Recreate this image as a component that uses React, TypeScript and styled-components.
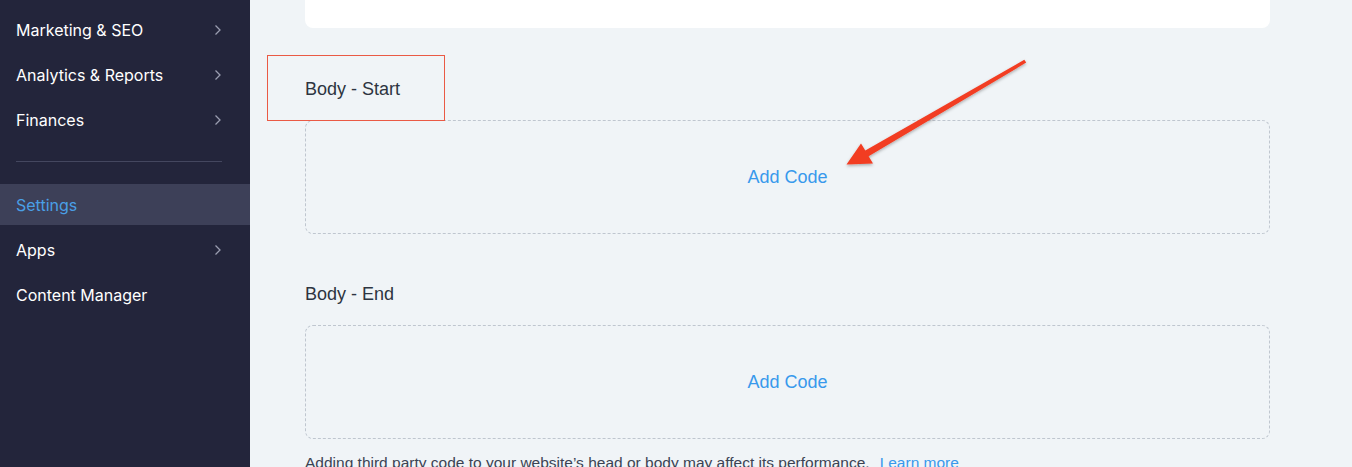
import React from 'react';
import styled, { createGlobalStyle } from 'styled-components';

const GlobalStyle = createGlobalStyle`
  html, body {
    margin: 0;
    padding: 0;
  }
  body {
    width: 1352px;
    height: 467px;
    overflow: hidden;
    background: #f0f4f7;
  }
`;

const Page = styled.div`
  position: relative;
  display: flex;
  width: 1352px;
  height: 467px;
  overflow: hidden;
`;

const Sidebar = styled.nav`
  display: flex;
  flex-direction: column;
  gap: 4px;
  width: 250px;
  flex-shrink: 0;
  background: #23253b;
  padding-top: 9px;
  box-sizing: border-box;
  font-family: Inter, 'Noto Sans', sans-serif;
`;

const NavItem = styled.div<{ $active?: boolean }>`
  display: flex;
  align-items: center;
  justify-content: space-between;
  height: 41px;
  flex-shrink: 0;
  padding: 0 28px 0 16px;
  font-size: 16px;
  font-weight: 400;
  color: ${p => (p.$active ? '#4a9fe6' : '#ffffff')};
  background: ${p => (p.$active ? '#3d4058' : 'transparent')};
`;

const Divider = styled.div`
  height: 1px;
  flex-shrink: 0;
  margin: 17px 28px 18px 16px;
  background: #44475f;
`;

const Main = styled.main`
  flex: 1;
  padding: 0 82px 0 55px;
  font-family: 'Liberation Sans', Arial, sans-serif;
  color: #2f3745;
`;

const TopCard = styled.div`
  height: 28px;
  background: #ffffff;
  border-radius: 0 0 8px 8px;
`;

const SectionTitle = styled.div<{ $top: number }>`
  font-size: 18px;
  line-height: 20px;
  margin-top: ${p => p.$top}px;
  margin-bottom: 21px;
  color: #2d3441;
`;

const CodeBox = styled.div`
  display: flex;
  align-items: center;
  justify-content: center;
  height: 114px;
  box-sizing: border-box;
  border: 1px dashed #bfc6cf;
  border-radius: 8px;
`;

const AddCode = styled.span`
  font-size: 18px;
  color: #3899ec;
`;

const Note = styled.p`
  margin: 14px 0 0;
  font-size: 15.5px;
  line-height: 20px;
  color: #3b4353;
  white-space: nowrap;
`;

const Link = styled.span`
  color: #3899ec;
  margin-left: 10px;
`;

const Highlight = styled.div`
  position: absolute;
  left: 267px;
  top: 55px;
  width: 178px;
  height: 66px;
  box-sizing: border-box;
  border: 1.5px solid #ea5a45;
  pointer-events: none;
`;

const Overlay = styled.svg`
  position: absolute;
  left: 0;
  top: 0;
  pointer-events: none;
`;

const Chevron = () => (
  <svg width="8" height="12" viewBox="0 0 8 12">
    <path d="M1.5 1.5 L6 6 L1.5 10.5" fill="none" stroke="#9a9db0" strokeWidth="1.3" />
  </svg>
);

const navTop = [
  { label: 'Marketing & SEO', more: true },
  { label: 'Analytics & Reports', more: true },
  { label: 'Finances', more: true },
];

const navBottom = [
  { label: 'Settings', more: false, active: true },
  { label: 'Apps', more: true },
  { label: 'Content Manager', more: false },
];

export default function App() {
  return (
    <>
      <GlobalStyle />
      <Page>
        <Sidebar>
          {navTop.map(n => (
            <NavItem key={n.label}>
              {n.label}
              {n.more && <Chevron />}
            </NavItem>
          ))}
          <Divider />
          {navBottom.map(n => (
            <NavItem key={n.label} $active={n.active}>
              {n.label}
              {n.more && <Chevron />}
            </NavItem>
          ))}
        </Sidebar>
        <Main>
          <TopCard />
          <SectionTitle $top={51}>Body - Start</SectionTitle>
          <CodeBox>
            <AddCode>Add Code</AddCode>
          </CodeBox>
          <SectionTitle $top={50}>Body - End</SectionTitle>
          <CodeBox>
            <AddCode>Add Code</AddCode>
          </CodeBox>
          <Note>
            Adding third party code to your website’s head or body may affect its performance.
            <Link>Learn more</Link>
          </Note>
        </Main>
        <Highlight />
        <Overlay width="1352" height="467" viewBox="0 0 1352 467">
          <defs>
            <filter id="arrowShadow" x="-10%" y="-10%" width="120%" height="130%">
              <feDropShadow dx="0" dy="1.5" stdDeviation="1.5" floodColor="#000" floodOpacity="0.3" />
            </filter>
          </defs>
          <polygon
            points="1024.3,59.8 1026.2,62.6 868.6,156.3 873,163.5 846.5,164.5 861,143.5 865.3,150.6"
            fill="#f23c22"
            filter="url(#arrowShadow)"
          />
        </Overlay>
      </Page>
    </>
  );
}
